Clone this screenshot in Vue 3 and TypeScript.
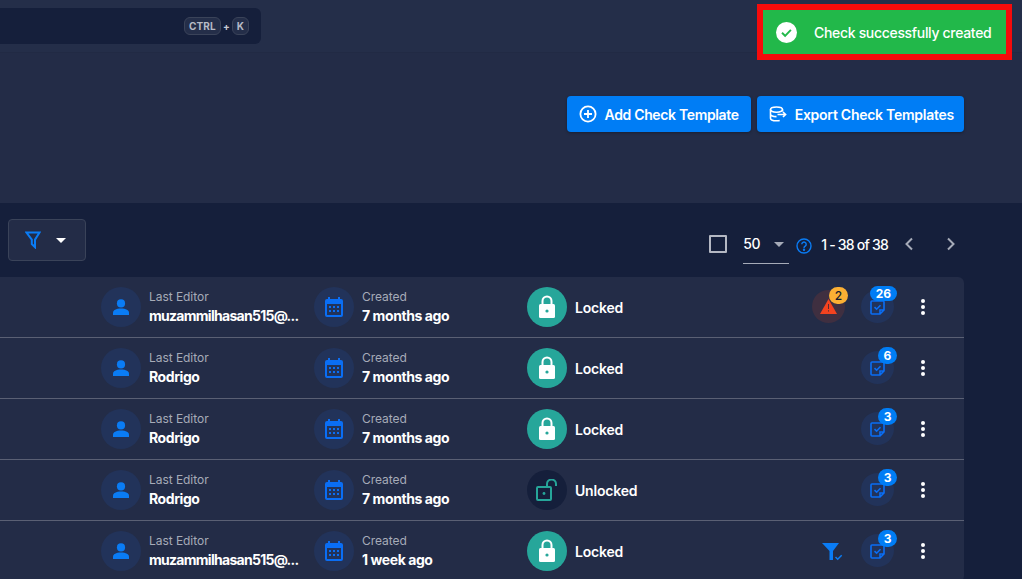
<script setup lang="ts">
interface Row {
  editor: string
  created: string
  locked: boolean
  warn?: number
  filter?: boolean
  count: number
}
const rows: Row[] = [
  { editor: 'muzammilhasan515@...', created: '7 months ago', locked: true, warn: 2, count: 26 },
  { editor: 'Rodrigo', created: '7 months ago', locked: true, count: 6 },
  { editor: 'Rodrigo', created: '7 months ago', locked: true, count: 3 },
  { editor: 'Rodrigo', created: '7 months ago', locked: false, count: 3 },
  { editor: 'muzammilhasan515@...', created: '1 week ago', locked: true, filter: true, count: 3 },
]
</script>

<template>
  <div class="page">
    <header class="topbar">
      <div class="search">
        <kbd class="key">CTRL</kbd><span class="plus">+</span><kbd class="key">K</kbd>
      </div>
    </header>

    <section class="hero">
      <button class="btn">
        <svg width="18" height="18" viewBox="0 0 18 18" fill="none" stroke="#fff" stroke-width="1.8">
          <circle cx="9" cy="9" r="7.6" /><path d="M9 5v8M5 9h8" />
        </svg>
        Add Check Template
      </button>
      <button class="btn">
        <svg width="18" height="18" viewBox="0 0 18 18" fill="none" stroke="#fff" stroke-width="1.6">
          <ellipse cx="7.5" cy="4.6" rx="6" ry="2.6" />
          <path d="M1.5 4.6v8.6c0 1.5 2.7 2.6 6 2.6 1.2 0 2.3-.1 3.2-.4M1.5 9c0 1.5 2.7 2.6 6 2.6M13.5 4.6v2" />
          <path d="M8.5 9.5h8M14 7l2.6 2.5L14 12" />
        </svg>
        Export Check Templates
      </button>
    </section>

    <main class="body">
      <div class="toolbar">
        <button class="filter">
          <svg width="16" height="18" viewBox="0 0 16 18" fill="none" stroke="#0a7cf5" stroke-width="2">
            <path d="M1.5 1.5h13L10 8.6v7.6L6.8 13V8.6z" />
          </svg>
          <span class="caret white"></span>
        </button>
        <div class="pager">
          <span class="check"></span>
          <span class="size">50<span class="caret grey"></span></span>
          <svg class="help" width="16" height="16" viewBox="0 0 16 16" fill="none" stroke="#0a7cf5" stroke-width="1.4">
            <circle cx="8" cy="8" r="7" />
            <path d="M5.8 6.2a2.2 2.2 0 1 1 3.4 1.9c-.8.5-1.2.9-1.2 1.8" />
            <circle cx="8" cy="11.8" r=".5" fill="#0a7cf5" />
          </svg>
          <span class="range">1 - 38 of 38</span>
          <svg class="nav first" width="12" height="14" viewBox="0 0 12 14" fill="none" stroke="#a6abb8" stroke-width="2"><path d="M9 1.5 3.5 7 9 12.5" /></svg>
          <svg class="nav" width="12" height="14" viewBox="0 0 12 14" fill="none" stroke="#a6abb8" stroke-width="2"><path d="M3 1.5 8.5 7 3 12.5" /></svg>
        </div>
      </div>

      <div class="table">
        <div v-for="(r, i) in rows" :key="i" class="row">
          <div class="cell editor">
            <span class="avatar">
              <svg width="16" height="16" viewBox="0 0 18 18" fill="#0a7cf5">
                <circle cx="9" cy="5" r="4.6" /><path d="M0 18v-2.4c0-3 3.4-4.8 9-4.8s9 1.8 9 4.8V18z" />
              </svg>
            </span>
            <div class="text">
              <span class="label">Last Editor</span>
              <span class="value" :class="{ long: r.editor.length > 12 }">{{ r.editor }}</span>
            </div>
          </div>
          <div class="cell created">
            <span class="avatar">
              <svg width="18" height="20" viewBox="0 0 18 20" fill="#0a6ef5">
                <path fill-rule="evenodd" d="M3 0h2v2h8V0h2v2h1a2 2 0 0 1 2 2v14a2 2 0 0 1-2 2H2a2 2 0 0 1-2-2V4a2 2 0 0 1 2-2h1zM2 7v11h14V7z" />
                <path d="M4 9h2v2H4zM8 9h2v2H8zM12 9h2v2h-2zM4 13h2v2H4zM8 13h2v2H8zM12 13h2v2h-2z" />
              </svg>
            </span>
            <div class="text">
              <span class="label">Created</span>
              <span class="value">{{ r.created }}</span>
            </div>
          </div>
          <div class="cell status">
            <span class="lock" :class="{ open: !r.locked }">
              <svg v-if="r.locked" width="18" height="24" viewBox="0 0 18 24">
                <path d="M4.5 10V6a4.5 4.5 0 0 1 9 0v4" fill="none" stroke="#fff" stroke-width="2" />
                <rect x="1" y="9" width="16" height="14" rx="1.5" fill="#fff" />
                <circle cx="9" cy="16" r="1.6" fill="#26a69a" />
              </svg>
              <svg v-else width="22" height="22" viewBox="0 0 22 22" fill="none" stroke="#26a69a" stroke-width="2">
                <rect x="1" y="8" width="14" height="13" rx="1" />
                <path d="M11 8V5a4.5 4.5 0 0 1 9 0v2" />
                <circle cx="8" cy="14.5" r="1.4" fill="#26a69a" stroke="none" />
              </svg>
            </span>
            <span class="status-text">{{ r.locked ? 'Locked' : 'Unlocked' }}</span>
          </div>
          <div class="actions">
            <span v-if="r.warn" class="warn">
              <svg width="17" height="15" viewBox="0 0 17 15">
                <path d="M8.5 0 17 15H0z" fill="#f4431f" />
                <path d="M8 5h1v5H8zM8 11.2h1v1.3H8z" fill="#5a2a33" />
              </svg>
              <span class="badge amber">{{ r.warn }}</span>
            </span>
            <svg v-if="r.filter" class="funnel" width="22" height="18" viewBox="0 0 22 18">
              <path d="M0 0h17l-6 8v9H7.5V8z" fill="#0a7cf5" />
              <path d="M13.5 14l2.2 2.2 4-4" fill="none" stroke="#0a7cf5" stroke-width="1.5" />
            </svg>
            <span class="checks">
              <svg width="15" height="15" viewBox="0 0 15 15" fill="none" stroke="#0a6ef5" stroke-width="1.6">
                <path d="M2 1h11a1 1 0 0 1 1 1v8l-4 4H2a1 1 0 0 1-1-1V2a1 1 0 0 1 1-1zM14 10h-4v4" />
                <path d="M4.5 7.2 6.6 9.2 10.5 5.2" />
              </svg>
              <span class="badge blue" :class="{ wide: r.count > 9 }">{{ r.count }}</span>
            </span>
            <span class="dots"><i></i><i></i><i></i></span>
          </div>
        </div>
      </div>
    </main>

    <div class="toast">
      <svg width="21" height="21" viewBox="0 0 21 21">
        <circle cx="10.5" cy="10.5" r="10.5" fill="#fff" />
        <path d="M6 10.8l3.1 3 5.8-6" fill="none" stroke="#22b84a" stroke-width="1.9" />
      </svg>
      <span>Check successfully created</span>
    </div>
  </div>
</template>

<style>
html, body { margin: 0; background: #151f3b; overflow: hidden; }
</style>

<style scoped>
.page {
  position: relative;
  width: 1022px;
  height: 579px;
  overflow: hidden;
  background: #151f3b;
  color: #fff;
  font-family: Inter, "Noto Sans", sans-serif;
  letter-spacing: -0.35px;
}
.topbar {
  height: 53px;
  box-sizing: border-box;
  padding-top: 8px;
  background: #242e49;
  border-bottom: 1px solid #212a44;
}
.search {
  width: 261px;
  height: 36px;
  box-sizing: border-box;
  padding-right: 12px;
  display: flex;
  align-items: center;
  justify-content: flex-end;
  gap: 1px;
  background: #151f3b;
  border-radius: 0 6px 6px 0;
}
.key {
  height: 18px;
  box-sizing: border-box;
  padding: 0 4px;
  display: inline-flex;
  align-items: center;
  border: 1px solid #3a4359;
  border-radius: 6px;
  background: #242e49;
  color: #b6bac6;
  font: 700 10px Inter, sans-serif;
  letter-spacing: 0.1px;
}
.plus { font-size: 10px; font-weight: 700; color: #c6cad4; width: 9px; text-align: center; }
.hero {
  height: 150px;
  box-sizing: border-box;
  padding: 43px 58px 0 0;
  display: flex;
  justify-content: flex-end;
  align-items: flex-start;
  gap: 6px;
  background: #232c47;
}
.btn {
  height: 36px;
  padding: 0 12px;
  display: flex;
  align-items: center;
  gap: 8px;
  border: 0;
  border-radius: 4px;
  background: #007df5;
  color: #fff;
  font: 600 14px Inter, sans-serif;
  letter-spacing: -0.35px;
  box-shadow: 0 1px 3px rgba(0, 0, 0, .3);
}
.btn:last-child { padding-right: 10px; letter-spacing: -0.26px; }
.body { padding: 16px 58px 0 0; }
.toolbar {
  height: 42px;
  margin-bottom: 16px;
  display: flex;
  align-items: center;
  justify-content: space-between;
  padding-left: 8px;
}
.filter {
  width: 78px;
  height: 42px;
  box-sizing: border-box;
  padding: 0 0 0 16px;
  display: flex;
  align-items: center;
  gap: 15px;
  background: #232c47;
  border: 1px solid #3a4359;
  border-radius: 4px;
}
.caret {
  display: inline-block;
  width: 0;
  height: 0;
  border-left: 5px solid transparent;
  border-right: 5px solid transparent;
  border-top: 5px solid #fff;
}
.caret.grey { border-left-width: 5.5px; border-right-width: 5.5px; border-top-color: #a6abb8; margin-left: 14px; vertical-align: 2px; }
.pager { display: flex; align-items: center; height: 42px; padding: 8px 7px 0 0; }
.check {
  width: 14px;
  height: 14px;
  border: 2px solid #b4b8c3;
  border-radius: 1px;
  margin-right: 16px;
}
.size {
  width: 46px;
  height: 38px;
  line-height: 36px;
  margin-top: 2px;
  box-sizing: border-box;
  border-bottom: 1px solid #a6abb8;
  font-size: 14px;
  font-weight: 500;
  margin-right: 7px;
}
.help { margin-right: 9px; margin-top: 3px; }
.range { font-size: 14px; font-weight: 500; letter-spacing: -0.78px; margin-right: 15px; white-space: nowrap; }
.nav.first { margin-right: 30px; }
.table {
  background: #232c47;
  border-radius: 0 6px 6px 0;
}
.row {
  height: 61px;
  box-sizing: border-box;
  display: grid;
  grid-template-columns: 213px 213px 1fr auto;
  align-items: center;
  padding-left: 101px;
  border-bottom: 1px solid #5a6074;
}
.row:first-child { height: 60.5px; }
.cell { display: flex; align-items: center; min-width: 0; }
.avatar {
  width: 40px;
  height: 40px;
  flex: none;
  display: flex;
  align-items: center;
  justify-content: center;
  border-radius: 50%;
  background: #22335a;
}
.text {
  margin-left: 8px;
  display: flex;
  flex-direction: column;
  gap: 2px;
  white-space: nowrap;
}
.label { font-size: 12px; line-height: 16px; color: #a6abb8; letter-spacing: -0.05px; }
.value { font-size: 14px; line-height: 18px; font-weight: 700; letter-spacing: -0.42px; }
.value.long { letter-spacing: -0.72px; }
.lock {
  width: 40px;
  height: 40px;
  display: flex;
  align-items: center;
  justify-content: center;
  border-radius: 50%;
  background: #26a69a;
}
.lock.open { background: #151f3b; }
.status-text { margin-left: 8px; padding-top: 2px; font-size: 14px; font-weight: 600; letter-spacing: -0.2px; }
.actions {
  display: flex;
  align-items: center;
  justify-content: flex-end;
  padding-right: 39px;
  gap: 16px;
}
.warn, .checks {
  position: relative;
  width: 33px;
  height: 33px;
  display: flex;
  align-items: center;
  justify-content: center;
  border-radius: 50%;
}
.warn { background: #3f2f40; }
.checks { background: #22335a; }
.checks svg { margin-top: 2px; }
.funnel { margin-right: 1px; margin-top: 2px; }
.badge {
  position: absolute;
  top: -4px;
  right: -3px;
  min-width: 19px;
  height: 17px;
  box-sizing: border-box;
  padding: 0 3px;
  border-radius: 10px;
  display: flex;
  align-items: center;
  justify-content: center;
  font-size: 12px;
  font-weight: 700;
  letter-spacing: 0;
}
.badge.blue { background: #007df5; color: #fff; }
.badge.blue.wide { width: 27px; height: 15px; top: -4px; right: -3px; }
.badge.amber { background: #fbb034; color: #161c2f; font-weight: 500; right: -3px; top: -3px; height: 17px; }
.dots {
  width: 4px;
  margin-left: 11px;
  display: flex;
  flex-direction: column;
  gap: 2px;
}
.dots i { width: 4px; height: 4px; border-radius: 50%; background: #fff; }
.toast {
  position: absolute;
  top: 4px;
  left: 757px;
  width: 255px;
  height: 56px;
  box-sizing: border-box;
  padding-left: 13px;
  display: flex;
  align-items: center;
  gap: 17px;
  background: #22b84a;
  border: 6px solid #f60b0b;
  font-size: 14px;
  font-weight: 500;
  letter-spacing: -0.32px;
}
</style>
